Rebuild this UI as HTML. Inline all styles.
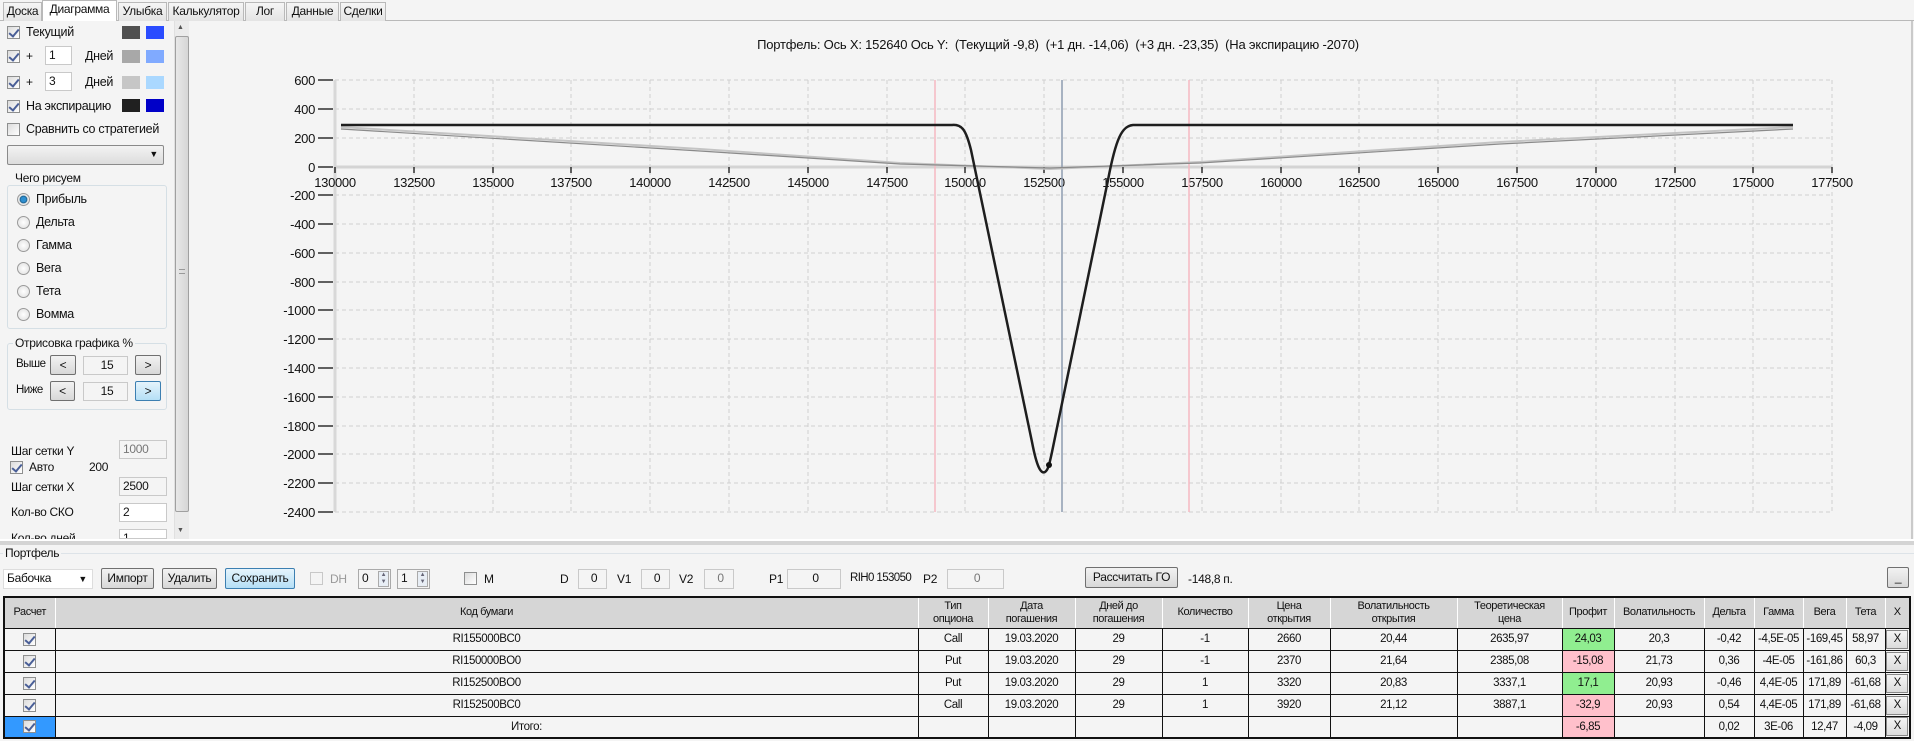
<!DOCTYPE html>
<html><head><meta charset="utf-8">
<style>
*{box-sizing:border-box;margin:0;padding:0}
body{width:1914px;height:741px;overflow:hidden;background:#f4f4f4;font-family:"Liberation Sans",Arial,sans-serif;font-size:12px;color:#111;position:relative;letter-spacing:-0.3px}
.a{position:absolute;white-space:nowrap}
.tab{position:absolute;top:2px;height:19px;border:1px solid #b9b9b9;border-bottom:none;background:linear-gradient(#f6f6f6,#e4e4e4);font-size:12px;text-align:center;line-height:17px}
.cb{position:absolute;width:13px;height:13px;border:1px solid #8e8f8f;background:linear-gradient(135deg,#dcdcdc,#fff)}
.cb.on::after{content:"";position:absolute;left:3px;top:0px;width:4px;height:8px;border:solid #4a5f97;border-width:0 2px 2px 0;transform:rotate(40deg)}
.rb{position:absolute;width:13px;height:13px;border-radius:50%;border:1px solid #9a9a9a;background:radial-gradient(#fff,#ddd)}
.rb.on{background:radial-gradient(#2e8fd0 30%,#1b5f8c 45%,#e8e8e8 55%)}
.sw{position:absolute;width:18px;height:13px}
.in{position:absolute;background:#fff;border:1px solid #c9c9c9;padding-left:3px;font-size:12px;line-height:17px}
.in.dis{background:#f4f4f4;color:#777}
.btn{position:absolute;border:1px solid #707070;background:linear-gradient(#f2f2f2,#d8d8d8);text-align:center;font-size:12px;line-height:18px;border-radius:2px}
.btn.hl{border-color:#3c7fb1;background:linear-gradient(#e5f4fc,#b5dff6)}
.grp{position:absolute;border:1px solid #d5dfe5;border-radius:3px}
.grpl{position:absolute;background:#f4f4f4;padding:0 2px;font-size:12px}
table{position:absolute;left:3px;top:596px;border-collapse:collapse;table-layout:fixed;border:2px solid #111}
td,th{border:1px solid #111;text-align:center;font-size:11.5px;overflow:hidden;white-space:nowrap;letter-spacing:-0.4px}
th{background:#d6d6d6;font-weight:normal;height:31px;line-height:13px;font-size:11px;border-color:#fff #fff #111 #fff}
td{height:22px;background:#f4f4f4}
td.g{background:#90ee90}td.p{background:#ffc0cb}
.xb{display:inline-block;width:22px;height:19px;border:1px solid #888;background:linear-gradient(#f4f4f4,#dcdcdc);line-height:17px}
.tcb{display:inline-block;width:13px;height:13px;border:1px solid #8e8f8f;background:linear-gradient(135deg,#dcdcdc,#fff);position:relative;vertical-align:middle}
.tcb::after{content:"";position:absolute;left:3px;top:0px;width:4px;height:8px;border:solid #4a5f97;border-width:0 2px 2px 0;transform:rotate(40deg)}
</style></head><body>

<div class="a" style="left:0;top:20px;width:1914px;height:1px;background:#b9b9b9"></div>
<div class="tab" style="left:3px;width:39px">Доска</div>
<div class="tab" style="left:42px;top:0;height:21px;width:75px;background:#fff">Диаграмма</div>
<div class="tab" style="left:118px;width:49px">Улыбка</div>
<div class="tab" style="left:168px;width:76px">Калькулятор</div>
<div class="tab" style="left:245px;width:40px">Лог</div>
<div class="tab" style="left:286px;width:53px">Данные</div>
<div class="tab" style="left:340px;width:46px">Сделки</div>

<svg class="a" style="left:0;top:0" width="1914" height="541" xmlns="http://www.w3.org/2000/svg">
<rect x="190" y="21" width="1723" height="518" fill="#f4f4f4"/>
<line x1="1912" y1="21" x2="1912" y2="539" stroke="#a0a0a0"/>
<g stroke="#d0d0d0" stroke-dasharray="4,3" stroke-width="1">
<line x1="414" y1="80" x2="414" y2="512"/><line x1="493" y1="80" x2="493" y2="512"/><line x1="571" y1="80" x2="571" y2="512"/><line x1="650" y1="80" x2="650" y2="512"/><line x1="729" y1="80" x2="729" y2="512"/><line x1="808" y1="80" x2="808" y2="512"/><line x1="887" y1="80" x2="887" y2="512"/><line x1="965" y1="80" x2="965" y2="512"/><line x1="1044" y1="80" x2="1044" y2="512"/><line x1="1123" y1="80" x2="1123" y2="512"/><line x1="1202" y1="80" x2="1202" y2="512"/><line x1="1281" y1="80" x2="1281" y2="512"/><line x1="1359" y1="80" x2="1359" y2="512"/><line x1="1438" y1="80" x2="1438" y2="512"/><line x1="1517" y1="80" x2="1517" y2="512"/><line x1="1596" y1="80" x2="1596" y2="512"/><line x1="1675" y1="80" x2="1675" y2="512"/><line x1="1753" y1="80" x2="1753" y2="512"/><line x1="1832" y1="80" x2="1832" y2="512"/>
<line x1="335" y1="80" x2="1832" y2="80"/><line x1="335" y1="109" x2="1832" y2="109"/><line x1="335" y1="138" x2="1832" y2="138"/><line x1="335" y1="195" x2="1832" y2="195"/><line x1="335" y1="224" x2="1832" y2="224"/><line x1="335" y1="253" x2="1832" y2="253"/><line x1="335" y1="282" x2="1832" y2="282"/><line x1="335" y1="310" x2="1832" y2="310"/><line x1="335" y1="339" x2="1832" y2="339"/><line x1="335" y1="368" x2="1832" y2="368"/><line x1="335" y1="397" x2="1832" y2="397"/><line x1="335" y1="426" x2="1832" y2="426"/><line x1="335" y1="454" x2="1832" y2="454"/><line x1="335" y1="483" x2="1832" y2="483"/><line x1="335" y1="512" x2="1832" y2="512"/>
</g>
<line x1="335" y1="80" x2="335" y2="512" stroke="#d8d8d8" stroke-width="3"/>
<line x1="335" y1="167" x2="1832" y2="167" stroke="#d4d4d4" stroke-width="3"/>
<g stroke="#111" stroke-width="1.3">
<line x1="318" y1="80" x2="333" y2="80"/><line x1="318" y1="109" x2="333" y2="109"/><line x1="318" y1="138" x2="333" y2="138"/><line x1="318" y1="167" x2="333" y2="167"/><line x1="318" y1="195" x2="333" y2="195"/><line x1="318" y1="224" x2="333" y2="224"/><line x1="318" y1="253" x2="333" y2="253"/><line x1="318" y1="282" x2="333" y2="282"/><line x1="318" y1="310" x2="333" y2="310"/><line x1="318" y1="339" x2="333" y2="339"/><line x1="318" y1="368" x2="333" y2="368"/><line x1="318" y1="397" x2="333" y2="397"/><line x1="318" y1="426" x2="333" y2="426"/><line x1="318" y1="454" x2="333" y2="454"/><line x1="318" y1="483" x2="333" y2="483"/><line x1="318" y1="512" x2="333" y2="512"/>
<line x1="335" y1="167" x2="335" y2="173"/><line x1="414" y1="167" x2="414" y2="173"/><line x1="493" y1="167" x2="493" y2="173"/><line x1="571" y1="167" x2="571" y2="173"/><line x1="650" y1="167" x2="650" y2="173"/><line x1="729" y1="167" x2="729" y2="173"/><line x1="808" y1="167" x2="808" y2="173"/><line x1="887" y1="167" x2="887" y2="173"/><line x1="965" y1="167" x2="965" y2="173"/><line x1="1044" y1="167" x2="1044" y2="173"/><line x1="1123" y1="167" x2="1123" y2="173"/><line x1="1202" y1="167" x2="1202" y2="173"/><line x1="1281" y1="167" x2="1281" y2="173"/><line x1="1359" y1="167" x2="1359" y2="173"/><line x1="1438" y1="167" x2="1438" y2="173"/><line x1="1517" y1="167" x2="1517" y2="173"/><line x1="1596" y1="167" x2="1596" y2="173"/><line x1="1675" y1="167" x2="1675" y2="173"/><line x1="1753" y1="167" x2="1753" y2="173"/><line x1="1832" y1="167" x2="1832" y2="173"/>
</g>
<g font-family="Liberation Sans, sans-serif" font-size="13" fill="#111" text-anchor="end" letter-spacing="-0.3">
<text x="315" y="85">600</text><text x="315" y="114">400</text><text x="315" y="143">200</text><text x="315" y="172">0</text><text x="315" y="200">-200</text><text x="315" y="229">-400</text><text x="315" y="258">-600</text><text x="315" y="287">-800</text><text x="315" y="315">-1000</text><text x="315" y="344">-1200</text><text x="315" y="373">-1400</text><text x="315" y="402">-1600</text><text x="315" y="431">-1800</text><text x="315" y="459">-2000</text><text x="315" y="488">-2200</text><text x="315" y="517">-2400</text>
</g>
<g font-family="Liberation Sans, sans-serif" font-size="13" fill="#111" text-anchor="middle" letter-spacing="-0.3">
<text x="335" y="187">130000</text><text x="414" y="187">132500</text><text x="493" y="187">135000</text><text x="571" y="187">137500</text><text x="650" y="187">140000</text><text x="729" y="187">142500</text><text x="808" y="187">145000</text><text x="887" y="187">147500</text><text x="965" y="187">150000</text><text x="1044" y="187">152500</text><text x="1123" y="187">155000</text><text x="1202" y="187">157500</text><text x="1281" y="187">160000</text><text x="1359" y="187">162500</text><text x="1438" y="187">165000</text><text x="1517" y="187">167500</text><text x="1596" y="187">170000</text><text x="1675" y="187">172500</text><text x="1753" y="187">175000</text><text x="1832" y="187">177500</text>
</g>
<line x1="935" y1="80" x2="935" y2="512" stroke="#f5b8c2" stroke-width="1.5"/>
<line x1="1189" y1="80" x2="1189" y2="512" stroke="#f5b8c2" stroke-width="1.5"/>
<line x1="1062" y1="80" x2="1062" y2="512" stroke="#8d9bb0" stroke-width="1.5"/>
<path d="M341,127 L700,149 L900,163 L1050,169 L1200,162 L1500,142 L1793,127" fill="none" stroke="#c4c4c4" stroke-width="2"/>
<path d="M341,129 L700,151 L900,164 L1050,168 L1200,163 L1500,144 L1793,129" fill="none" stroke="#8a8a8a" stroke-width="1.2"/>
<path d="M341,125 L952,125 C962,124 966,130 971,150 L1032,442 C1037,468 1041,474 1045,472 C1048,470 1049,466 1052,452 L1108,180 C1116,138 1122,126 1133,125 L1793,125" fill="none" stroke="#1e1e1e" stroke-width="2.5"/>
<circle cx="1049" cy="465" r="3" fill="#111"/>
<text x="1058" y="49" font-family="Liberation Sans, sans-serif" font-size="13" fill="#111" text-anchor="middle" letter-spacing="-0.2" xml:space="preserve">Портфель: Ось X: 152640 Ось Y:  (Текущий -9,8)  (+1 дн. -14,06)  (+3 дн. -23,35)  (На экспирацию -2070)</text>
</svg>

<div class="cb on" style="left:7px;top:26px"></div><div class="a" style="left:26px;top:25px;font-size:12.5px">Текущий</div>
<div class="sw" style="left:122px;top:26px;background:#505050"></div><div class="sw" style="left:146px;top:26px;background:#2a4cff"></div>
<div class="cb on" style="left:7px;top:50px"></div><div class="a" style="left:26px;top:49px">+</div>
<div class="in" style="left:45px;top:46px;width:27px;height:19px">1</div><div class="a" style="left:85px;top:49px;font-size:12.5px">Дней</div>
<div class="sw" style="left:122px;top:50px;background:#a8a8a8"></div><div class="sw" style="left:146px;top:50px;background:#80aaff"></div>
<div class="cb on" style="left:7px;top:76px"></div><div class="a" style="left:26px;top:75px">+</div>
<div class="in" style="left:45px;top:72px;width:27px;height:19px">3</div><div class="a" style="left:85px;top:75px;font-size:12.5px">Дней</div>
<div class="sw" style="left:122px;top:76px;background:#c6c6c6"></div><div class="sw" style="left:146px;top:76px;background:#aad8ff"></div>
<div class="cb on" style="left:7px;top:100px"></div><div class="a" style="left:26px;top:99px;font-size:12.5px">На экспирацию</div>
<div class="sw" style="left:122px;top:99px;background:#202020"></div><div class="sw" style="left:146px;top:99px;background:#0000c8"></div>
<div class="cb" style="left:7px;top:123px"></div><div class="a" style="left:26px;top:122px;font-size:12.5px">Сравнить со стратегией</div>
<div class="a" style="left:7px;top:145px;width:157px;height:20px;border:1px solid #8a8a8a;border-radius:2px;background:linear-gradient(#f3f3f3,#dcdcdc)"><span class="a" style="right:5px;top:3px;font-size:9px">▼</span></div>
<div class="grp" style="left:7px;top:185px;width:160px;height:144px"></div><div class="grpl" style="left:13px;top:171px">Чего рисуем</div>
<div class="rb on" style="left:17px;top:193px"></div><div class="a" style="left:36px;top:192px;font-size:12.5px">Прибыль</div>
<div class="rb" style="left:17px;top:216px"></div><div class="a" style="left:36px;top:215px;font-size:12.5px">Дельта</div>
<div class="rb" style="left:17px;top:239px"></div><div class="a" style="left:36px;top:238px;font-size:12.5px">Гамма</div>
<div class="rb" style="left:17px;top:262px"></div><div class="a" style="left:36px;top:261px;font-size:12.5px">Вега</div>
<div class="rb" style="left:17px;top:285px"></div><div class="a" style="left:36px;top:284px;font-size:12.5px">Тета</div>
<div class="rb" style="left:17px;top:308px"></div><div class="a" style="left:36px;top:307px;font-size:12.5px">Вомма</div>
<div class="grp" style="left:7px;top:343px;width:160px;height:67px"></div><div class="grpl" style="left:13px;top:336px">Отрисовка графика %</div>
<div class="a" style="left:16px;top:358px;font-size:11.5px;letter-spacing:-0.5px">Выше</div>
<div class="btn" style="left:50px;top:355px;width:26px;height:20px">&lt;</div>
<div class="in dis" style="left:83px;top:356px;width:45px;height:19px;text-align:center;color:#111">15</div>
<div class="btn" style="left:135px;top:355px;width:26px;height:20px">&gt;</div>
<div class="a" style="left:16px;top:384px;font-size:11.5px;letter-spacing:-0.5px">Ниже</div>
<div class="btn" style="left:50px;top:381px;width:25px;height:20px">&lt;</div>
<div class="in dis" style="left:83px;top:382px;width:45px;height:19px;text-align:center;color:#111">15</div>
<div class="btn hl" style="left:135px;top:381px;width:26px;height:20px">&gt;</div>
<div class="a" style="left:11px;top:444px">Шаг сетки Y</div>
<div class="in dis" style="left:119px;top:440px;width:48px;height:19px">1000</div>
<div class="cb on" style="left:10px;top:461px"></div><div class="a" style="left:29px;top:460px">Авто</div><div class="a" style="left:89px;top:460px">200</div>
<div class="a" style="left:11px;top:480px">Шаг сетки X</div>
<div class="in dis" style="left:119px;top:477px;width:48px;height:19px;color:#111">2500</div>
<div class="a" style="left:11px;top:505px">Кол-во СКО</div>
<div class="in" style="left:119px;top:503px;width:48px;height:19px">2</div>
<div class="a" style="left:11px;top:531px;height:8px;overflow:hidden">Кол-во дней</div>
<div class="in" style="left:119px;top:529px;width:48px;height:10px;overflow:hidden;line-height:17px">1</div>
<div class="a" style="left:174px;top:21px;width:15px;height:518px;background:#ebebeb;border-left:1px solid #e0e0e0"></div>
<div class="a" style="left:177px;top:24px;font-size:7px;color:#555">▲</div>
<div class="a" style="left:175px;top:36px;width:14px;height:476px;background:linear-gradient(90deg,#e8e8e8,#d6d6d6);border:1px solid #a0a0a0;border-radius:2px"></div>
<div class="a" style="left:179px;top:269px;width:6px;height:5px;border-top:1px solid #999;border-bottom:1px solid #999"></div>
<div class="a" style="left:177px;top:527px;font-size:7px;color:#555">▼</div>

<div class="a" style="left:0;top:539px;width:1914px;height:2px;background:#fff"></div>
<div class="a" style="left:0;top:541px;width:1914px;height:4px;background:#d4d4d4"></div>
<div class="a" style="left:0;top:553px;width:1914px;height:1px;background:#dde3e8"></div>
<div class="grpl" style="left:3px;top:546px">Портфель</div>

<div class="in" style="left:3px;top:569px;width:90px;height:20px;border-color:#ddd">Бабочка<span class="a" style="right:5px;top:1px;font-size:9px">▼</span></div>
<div class="btn" style="left:101px;top:568px;width:53px;height:21px">Импорт</div>
<div class="btn" style="left:162px;top:568px;width:55px;height:21px">Удалить</div>
<div class="btn hl" style="left:225px;top:568px;width:70px;height:21px">Сохранить</div>
<div class="cb" style="left:310px;top:572px;border-color:#c8c8c8;background:#f4f4f4"></div><div class="a" style="left:330px;top:572px;color:#999">DH</div>
<div class="in" style="left:358px;top:569px;width:33px;height:20px;border-color:#aaa;background:#f4f4f4">0<span class="a" style="right:1px;top:1px;width:11px;height:16px;border:1px solid #aaa;background:#e8eef5;font-size:6px;line-height:7px;text-align:center;color:#667">▲<br>▼</span></div>
<div class="in" style="left:397px;top:569px;width:33px;height:20px;border-color:#aaa;background:#f4f4f4">1<span class="a" style="right:1px;top:1px;width:11px;height:16px;border:1px solid #aaa;background:#e8eef5;font-size:6px;line-height:7px;text-align:center;color:#667">▲<br>▼</span></div>
<div class="cb" style="left:464px;top:572px"></div><div class="a" style="left:484px;top:572px">M</div>
<div class="a" style="left:560px;top:572px">D</div><div class="in dis" style="left:578px;top:569px;width:29px;height:20px;text-align:center;color:#111">0</div>
<div class="a" style="left:617px;top:572px">V1</div><div class="in dis" style="left:641px;top:569px;width:29px;height:20px;text-align:center;color:#111">0</div>
<div class="a" style="left:679px;top:572px">V2</div><div class="in dis" style="left:704px;top:569px;width:30px;height:20px;text-align:center">0</div>
<div class="a" style="left:769px;top:572px">P1</div><div class="in dis" style="left:787px;top:569px;width:54px;height:20px;text-align:center;color:#111">0</div>
<div class="a" style="left:850px;top:572px;font-size:11.5px;letter-spacing:-0.6px">RIH0 153050</div>
<div class="a" style="left:923px;top:572px">P2</div><div class="in dis" style="left:947px;top:569px;width:57px;height:20px;text-align:center">0</div>
<div class="btn" style="left:1085px;top:567px;width:93px;height:21px">Рассчитать ГО</div>
<div class="a" style="left:1188px;top:572px">-148,8 п.</div>
<div class="btn" style="left:1887px;top:567px;width:22px;height:21px">_</div>

<table style="width:1906px">
<colgroup><col style="width:51px"><col style="width:863px"><col style="width:70px"><col style="width:87px"><col style="width:87px"><col style="width:86px"><col style="width:82px"><col style="width:127px"><col style="width:105px"><col style="width:52px"><col style="width:90px"><col style="width:50px"><col style="width:49px"><col style="width:43px"><col style="width:39px"><col style="width:25px"></colgroup>
<tr><th>Расчет</th><th>Код бумаги</th><th>Тип<br>опциона</th><th>Дата<br>погашения</th><th>Дней до<br>погашения</th><th>Количество</th><th>Цена<br>открытия</th><th>Волатильность<br>открытия</th><th>Теоретическая<br>цена</th><th>Профит</th><th>Волатильность</th><th>Дельта</th><th>Гамма</th><th>Вега</th><th>Тета</th><th>X</th></tr>
<tr><td><span class="tcb"></span></td><td>RI155000BC0</td><td>Call</td><td>19.03.2020</td><td>29</td><td>-1</td><td>2660</td><td>20,44</td><td>2635,97</td><td class="g">24,03</td><td>20,3</td><td>-0,42</td><td>-4,5E-05</td><td>-169,45</td><td>58,97</td><td><span class="xb">X</span></td></tr>
<tr><td><span class="tcb"></span></td><td>RI150000BO0</td><td>Put</td><td>19.03.2020</td><td>29</td><td>-1</td><td>2370</td><td>21,64</td><td>2385,08</td><td class="p">-15,08</td><td>21,73</td><td>0,36</td><td>-4E-05</td><td>-161,86</td><td>60,3</td><td><span class="xb">X</span></td></tr>
<tr><td><span class="tcb"></span></td><td>RI152500BO0</td><td>Put</td><td>19.03.2020</td><td>29</td><td>1</td><td>3320</td><td>20,83</td><td>3337,1</td><td class="g">17,1</td><td>20,93</td><td>-0,46</td><td>4,4E-05</td><td>171,89</td><td>-61,68</td><td><span class="xb">X</span></td></tr>
<tr><td><span class="tcb"></span></td><td>RI152500BC0</td><td>Call</td><td>19.03.2020</td><td>29</td><td>1</td><td>3920</td><td>21,12</td><td>3887,1</td><td class="p">-32,9</td><td>20,93</td><td>0,54</td><td>4,4E-05</td><td>171,89</td><td>-61,68</td><td><span class="xb">X</span></td></tr>
<tr><td style="background:#3399ff"><span class="tcb"></span></td><td style="padding-left:80px">Итого:</td><td></td><td></td><td></td><td></td><td></td><td></td><td></td><td class="p">-6,85</td><td></td><td>0,02</td><td>3E-06</td><td>12,47</td><td>-4,09</td><td><span class="xb">X</span></td></tr>
</table>
</body></html>
